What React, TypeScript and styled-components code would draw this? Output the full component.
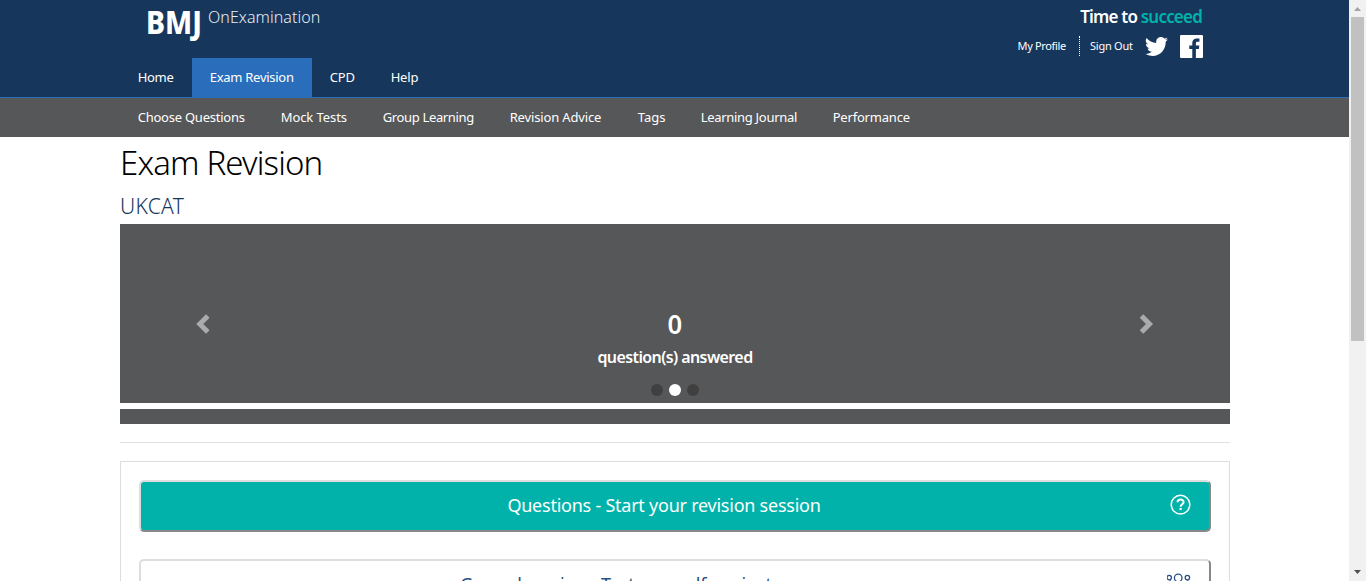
import React from "react";
import styled, { createGlobalStyle } from "styled-components";

const GlobalStyle = createGlobalStyle`
  *, *::before, *::after { box-sizing: border-box; }
  body {
    margin: 0;
    overflow: hidden;
    background: #fff;
    font-family: "Noto Sans", "Open Sans", sans-serif;
    font-size: 13px;
  }
  h1, h2, p { margin: 0; font-weight: 400; }
  a { color: inherit; text-decoration: none; }
`;

const Window = styled.div`
  display: grid;
  grid-template-columns: minmax(0, 1fr) 17px;
  height: 581px;
  overflow: hidden;
`;

const Page = styled.div`
  overflow: hidden;
`;

const Container = styled.div`
  width: 1110px;
  margin-left: 120px;
`;

const Header = styled.header`
  height: 98px;
  background: #16365c;
  border-bottom: 1px solid #2a6ebb;
  color: #fff;
`;

const HeaderTop = styled.div`
  display: flex;
  justify-content: space-between;
  height: 58px;
  padding: 0 27px 0 26px;
`;

const Logo = styled.a`
  display: flex;
  align-items: flex-start;
`;

const LogoMark = styled.span`
  width: 62px;
  font-size: 32px;
  font-weight: 800;
  line-height: 43px;
  transform: scaleX(0.89);
  transform-origin: left;
`;

const LogoName = styled.span`
  font-size: 16px;
  font-weight: 350;
  line-height: 34px;
  letter-spacing: 0.05px;
  color: #e8edf3;
`;

const Account = styled.div`
  display: flex;
  flex-direction: column;
  align-items: flex-end;
`;

const Slogan = styled.p`
  height: 34px;
  font-size: 17px;
  font-weight: 600;
  line-height: 33px;
  letter-spacing: -0.8px;
  white-space: nowrap;
  padding-right: 1px;
  em {
    font-style: normal;
    color: #00b2a9;
  }
`;

const AccountLinks = styled.div`
  display: flex;
  align-items: center;
  height: 24px;
  font-size: 11px;
  letter-spacing: -0.35px;
  white-space: nowrap;
`;

const ProfileLink = styled.a`
  height: 20px;
  width: 62.5px;
  line-height: 20px;
  border-right: 1px dotted #fff;
`;

const SignOutLink = styled.a`
  width: 65px;
  padding-left: 10px;
  line-height: 20px;
  letter-spacing: -0.25px;
`;

const TwitterIcon = styled.svg`
  width: 23px;
  height: 19px;
  margin-right: 12px;
`;

const FacebookIcon = styled.svg`
  width: 23px;
  height: 23px;
`;

const Nav = styled.nav`
  display: flex;
  height: 39px;
`;

const SubBar = styled.div`
  height: 39px;
  background: #565759;
  color: #fff;
`;

const NavItem = styled.a<{ $width: number; $spacing: number; $active?: boolean }>`
  flex: none;
  width: ${(p) => p.$width}px;
  padding-left: 17.7px;
  line-height: 39px;
  white-space: nowrap;
  letter-spacing: ${(p) => p.$spacing}px;
  background: ${(p) => (p.$active ? "#2a6ebb" : "transparent")};
`;

const Title = styled.h1`
  height: 53px;
  font-size: 33px;
  font-weight: 350;
  line-height: 52px;
  letter-spacing: -0.85px;
  color: #000;
`;

const Subtitle = styled.h2`
  height: 34px;
  font-size: 21px;
  font-weight: 350;
  line-height: 32px;
  letter-spacing: 0.3px;
  color: #16365c;
`;

const Carousel = styled.section`
  display: grid;
  grid-template-columns: 166px 1fr 168px;
  height: 179px;
  padding-top: 86px;
  background: #565759;
  color: #fff;
`;

const Arrow = styled.svg`
  width: 16px;
  height: 22px;
  margin: 3px auto 0;
  fill: none;
  stroke: #aaabac;
  stroke-width: 5;
`;

const Slide = styled.div`
  display: flex;
  flex-direction: column;
  align-items: center;
  padding-left: 2px;
`;

const Count = styled.p`
  height: 30px;
  font-size: 27px;
  font-weight: 600;
  line-height: 27px;
  transform: scaleX(0.95);
`;

const Caption = styled.p`
  font-size: 16px;
  font-weight: 600;
  line-height: 35px;
  height: 36px;
  letter-spacing: -0.6px;
`;

const Dots = styled.div`
  display: flex;
  gap: 6px;
  margin-top: 8px;
`;

const Dot = styled.span<{ $active?: boolean }>`
  width: 12px;
  height: 12px;
  border-radius: 50%;
  background: ${(p) => (p.$active ? "#fff" : "#404040")};
`;

const Strip = styled.div`
  height: 15px;
  margin-top: 6px;
  background: #565759;
`;

const Rule = styled.hr`
  margin: 18px 0;
  border: 0;
  border-top: 1px solid #e2e2e2;
`;

const Panel = styled.section`
  display: flex;
  flex-direction: column;
  gap: 27px;
  padding: 18px;
  border: 1px solid #ddd;
`;

const ActionButton = styled.button<{ $primary?: boolean }>`
  display: grid;
  grid-template-columns: 30px 1fr 30px;
  align-items: center;
  width: 1072px;
  height: 52px;
  padding: 0 14px 2px 14px;
  border: 2px solid;
  border-color: #ddd #888 #888 #ddd;
  border-radius: 5px;
  background: ${(p) => (p.$primary ? "#00b2a9" : "#fff")};
  color: ${(p) => (p.$primary ? "#fff" : "#2a5082")};
  font: 400 18px "Noto Sans", "Open Sans", sans-serif;
`;

const ActionLabel = styled.span<{ $shift: number; $spacing: number }>`
  grid-column: 2;
  padding-right: ${(p) => p.$shift}px;
  letter-spacing: ${(p) => p.$spacing}px;
  white-space: nowrap;
`;

const ActionIcon = styled.svg`
  width: 26px;
  height: 24px;
  justify-self: center;
  fill: none;
  stroke: currentColor;
`;

const Scrollbar = styled.div`
  display: flex;
  flex-direction: column;
  align-items: center;
  justify-content: space-between;
  background: #f1f1f1;
`;

const ScrollArrow = styled.svg`
  display: block;
  width: 17px;
  height: 17px;
`;

const Thumb = styled.div`
  width: 13px;
  height: 324px;
  margin-bottom: auto;
  background: #c1c1c1;
`;

const mainNav = [
  { label: "Home", width: 72, spacing: -0.3 },
  { label: "Exam Revision", width: 120, spacing: -0.27, active: true },
  { label: "CPD", width: 61, spacing: -0.1 },
  { label: "Help", width: 63, spacing: -0.2 },
];

const subNav = [
  { label: "Choose Questions", width: 143, spacing: -0.24 },
  { label: "Mock Tests", width: 102, spacing: -0.08 },
  { label: "Group Learning", width: 127, spacing: -0.35 },
  { label: "Revision Advice", width: 128, spacing: -0.15 },
  { label: "Tags", width: 63, spacing: 0 },
  { label: "Learning Journal", width: 132, spacing: -0.3 },
  { label: "Performance", width: 113, spacing: -0.2 },
];

export default function App() {
  return (
    <Window>
      <GlobalStyle />
      <Page>
        <Header>
          <Container>
            <HeaderTop>
              <Logo href="#">
                <LogoMark>BMJ</LogoMark>
                <LogoName>OnExamination</LogoName>
              </Logo>
              <Account>
                <Slogan>
                  Time to <em>succeed</em>
                </Slogan>
                <AccountLinks>
                  <ProfileLink href="#">My Profile</ProfileLink>
                  <SignOutLink href="#">Sign Out</SignOutLink>
                  <TwitterIcon viewBox="0 2.2 24 19.6" preserveAspectRatio="none">
                    <path
                      fill="#fff"
                      d="M23.95 4.57a10 10 0 0 1-2.82.77 4.96 4.96 0 0 0 2.16-2.72c-.95.55-2 .95-3.13 1.18a4.92 4.92 0 0 0-8.38 4.48C7.69 8.1 4.07 6.13 1.64 3.16a4.92 4.92 0 0 0 1.52 6.57 4.9 4.9 0 0 1-2.23-.61v.06c0 2.39 1.7 4.38 3.95 4.83a5 5 0 0 1-2.21.08 4.94 4.94 0 0 0 4.6 3.42A9.87 9.87 0 0 1 0 19.54a13.99 13.99 0 0 0 7.56 2.21c9.05 0 14-7.5 14-13.98 0-.21 0-.42-.02-.63a9.94 9.94 0 0 0 2.46-2.55z"
                    />
                  </TwitterIcon>
                  <FacebookIcon viewBox="0 0 24 24">
                    <path
                      fill="#fff"
                      d="M22.68 0H1.32C.6 0 0 .6 0 1.32v21.36C0 23.4.6 24 1.32 24h11.5v-9.3H9.69v-3.62h3.13V8.41c0-3.1 1.9-4.79 4.66-4.79 1.33 0 2.47.1 2.8.14v3.24h-1.92c-1.5 0-1.8.72-1.8 1.76v2.31h3.6l-.47 3.63h-3.12V24h6.11c.73 0 1.32-.6 1.32-1.32V1.32C24 .6 23.4 0 22.68 0z"
                    />
                  </FacebookIcon>
                </AccountLinks>
              </Account>
            </HeaderTop>
            <Nav>
              {mainNav.map((n) => (
                <NavItem key={n.label} href="#" $width={n.width} $spacing={n.spacing} $active={n.active}>
                  {n.label}
                </NavItem>
              ))}
            </Nav>
          </Container>
        </Header>
        <SubBar>
          <Container>
            <Nav>
              {subNav.map((n) => (
                <NavItem key={n.label} href="#" $width={n.width} $spacing={n.spacing}>
                  {n.label}
                </NavItem>
              ))}
            </Nav>
          </Container>
        </SubBar>
        <Container as="main">
          <Title>Exam Revision</Title>
          <Subtitle>UKCAT</Subtitle>
          <Carousel>
            <Arrow viewBox="0 0 16 22">
              <path d="M12.8 3 L4.8 11 L12.8 19" />
            </Arrow>
            <Slide>
              <Count>0</Count>
              <Caption>question(s) answered</Caption>
              <Dots>
                <Dot />
                <Dot $active />
                <Dot />
              </Dots>
            </Slide>
            <Arrow viewBox="0 0 16 22">
              <path d="M3.5 3 L11.5 11 L3.5 19" />
            </Arrow>
          </Carousel>
          <Strip />
          <Rule />
          <Panel>
            <ActionButton $primary>
              <ActionLabel $shift={22} $spacing={-0.24}>
                Questions - Start your revision session
              </ActionLabel>
              <ActionIcon viewBox="0 0 26 24">
                <circle cx="13.5" cy="11.6" r="9.3" strokeWidth="1.5" />
                <path d="M10.5 9.2c.2-3.5 6.2-3.5 6.1-.1-.1 2.1-3 2.2-3 4.6" strokeWidth="2" />
                <path d="M13.6 15v2.1" strokeWidth="2.2" />
              </ActionIcon>
            </ActionButton>
            <ActionButton>
              <ActionLabel $shift={118} $spacing={-0.14}>
                Group learning - Test yourself against
              </ActionLabel>
              <ActionIcon viewBox="0 0 26 24" strokeWidth="1.3">
                <circle cx="1.6" cy="5.6" r="2.2" transform="translate(0.6 0)" />
                <circle cx="11.2" cy="6" r="3.8" />
                <circle cx="20.4" cy="5.6" r="2.2" />
                <path d="M5 20c0-10 13-10 13 0M1 15c0-4 1-6 3-6M23 15c0-4-1-6-3-6" />
              </ActionIcon>
            </ActionButton>
          </Panel>
        </Container>
      </Page>
      <Scrollbar>
        <ScrollArrow viewBox="0 0 17 17">
          <path d="M5 11 L8.5 7 L12 11z" fill="#a3a3a3" />
        </ScrollArrow>
        <Thumb />
        <ScrollArrow viewBox="0 0 17 17">
          <path d="M5 6 L8.5 10 L12 6z" fill="#505050" />
        </ScrollArrow>
      </Scrollbar>
    </Window>
  );
}
